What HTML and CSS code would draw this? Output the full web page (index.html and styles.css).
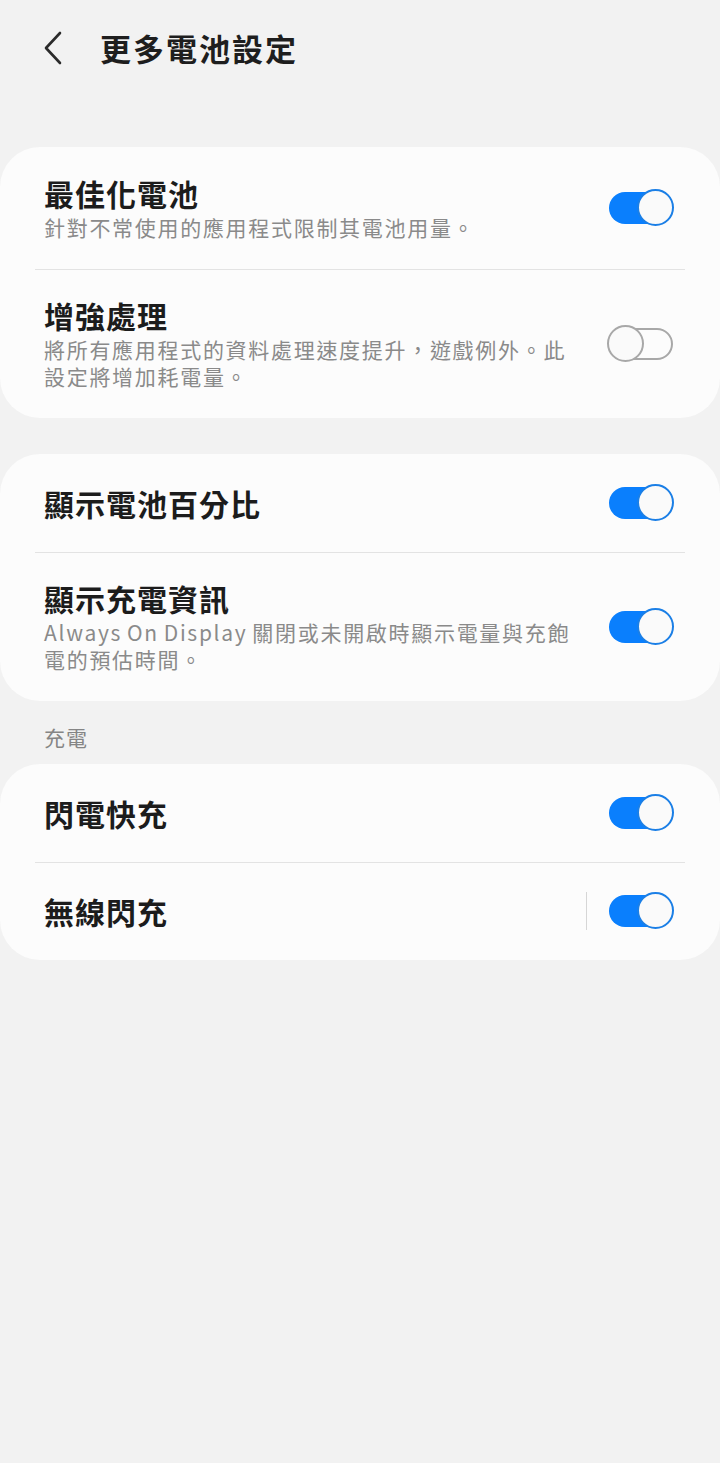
FILE: index.html
```html
<!DOCTYPE html>
<html lang="zh-Hant">
<head>
<meta charset="utf-8">
<title>更多電池設定</title>
<link rel="stylesheet" href="styles.css">
</head>
<body>
<div class="page">
  <header class="appbar">
    <svg class="back" width="24" height="34" viewBox="0 0 24 34"><path d="M18 2 L4 17 L18 32" fill="none" stroke="#2b2b2b" stroke-width="2.6" stroke-linecap="round" stroke-linejoin="round"/></svg>
    <h1 class="title">更多電池設定</h1>
  </header>

  <section class="card">
    <div class="row">
      <div class="text">
        <div class="label">最佳化電池</div>
        <div class="desc">針對不常使用的應用程式限制其電池用量。</div>
      </div>
      <span class="switch on"><span class="thumb"></span></span>
    </div>
    <div class="row">
      <div class="text">
        <div class="label">增強處理</div>
        <div class="desc">將所有應用程式的資料處理速度提升，遊戲例外。此設定將增加耗電量。</div>
      </div>
      <span class="switch off"><span class="thumb"></span></span>
    </div>
  </section>

  <section class="card">
    <div class="row single">
      <div class="text">
        <div class="label">顯示電池百分比</div>
      </div>
      <span class="switch on"><span class="thumb"></span></span>
    </div>
    <div class="row">
      <div class="text">
        <div class="label">顯示充電資訊</div>
        <div class="desc">Always On Display 關閉或未開啟時顯示電量與充飽電的預估時間。</div>
      </div>
      <span class="switch on"><span class="thumb"></span></span>
    </div>
  </section>

  <div class="section-label">充電</div>

  <section class="card">
    <div class="row single">
      <div class="text">
        <div class="label">閃電快充</div>
      </div>
      <span class="switch on"><span class="thumb"></span></span>
    </div>
    <div class="row single">
      <div class="text">
        <div class="label">無線閃充</div>
      </div>
      <span class="vsep"></span>
      <span class="switch on"><span class="thumb"></span></span>
    </div>
  </section>
</div>
</body>
</html>
```

FILE: styles.css
```css
html, body {
  margin: 0;
  padding: 0;
  background: #f2f2f2;
}
body {
  font-family: "Noto Sans CJK TC", "Noto Sans", Roboto, sans-serif;
  color: #1c1c1c;
  width: 720px;
  height: 1463px;
}
.page {
  display: flex;
  flex-direction: column;
}
.appbar {
  height: 96px;
  display: flex;
  align-items: center;
  padding-left: 42px;
  margin-bottom: 51px;
}
.back {
  display: block;
  margin-right: 34px;
}
.title {
  margin: 0;
  font-size: 31px;
  font-weight: 700;
  line-height: 40px;
  color: #1e1e1e;
  letter-spacing: 2px;
}
.card {
  background: #fcfcfc;
  border-radius: 40px;
  margin-bottom: 36px;
  display: flex;
  flex-direction: column;
}
.row {
  display: flex;
  align-items: center;
  padding: 28px 47px 28px 44px;
  position: relative;
}
.row + .row::before {
  content: "";
  position: absolute;
  left: 35px;
  right: 35px;
  top: 0;
  height: 1px;
  background: #e3e3e3;
}
.row.single {
  height: 98px;
  box-sizing: border-box;
  padding-top: 0;
  padding-bottom: 0;
}
.text {
  flex: 1;
  min-width: 0;
  padding-right: 38px;
}
.label {
  font-size: 30px;
  font-weight: 700;
  line-height: 36px;
  color: #1c1c1c;
  letter-spacing: 1px;
}
.desc {
  margin-top: 3px;
  font-size: 21px;
  line-height: 27px;
  color: #8a8a8a;
  letter-spacing: 1.7px;
  word-spacing: -1.5px;
}
.section-label {
  font-size: 21px;
  line-height: 27px;
  color: #858585;
  padding-left: 44px;
  margin-top: -13px;
  margin-bottom: 13px;
  letter-spacing: 1px;
}
.switch {
  flex: none;
  position: relative;
  width: 64px;
  height: 32px;
  border-radius: 16px;
  box-sizing: border-box;
}
.switch.on {
  background: #0a7ffd;
}
.switch.off {
  background: transparent;
  border: 2px solid #a8a8a8;
}
.thumb {
  position: absolute;
  top: -3px;
  width: 37px;
  height: 37px;
  border-radius: 50%;
  box-sizing: border-box;
  background: #fafafa;
}
.switch.on .thumb {
  right: -1px;
  top: -3px;
  border: 2px solid #1b7fe6;
}
.switch.off .thumb {
  left: -4px;
  top: -5px;
  border: 2px solid #a8a8a8;
}
.vsep {
  flex: none;
  width: 1px;
  height: 38px;
  background: #d6d6d6;
  margin-right: 22px;
}
```
